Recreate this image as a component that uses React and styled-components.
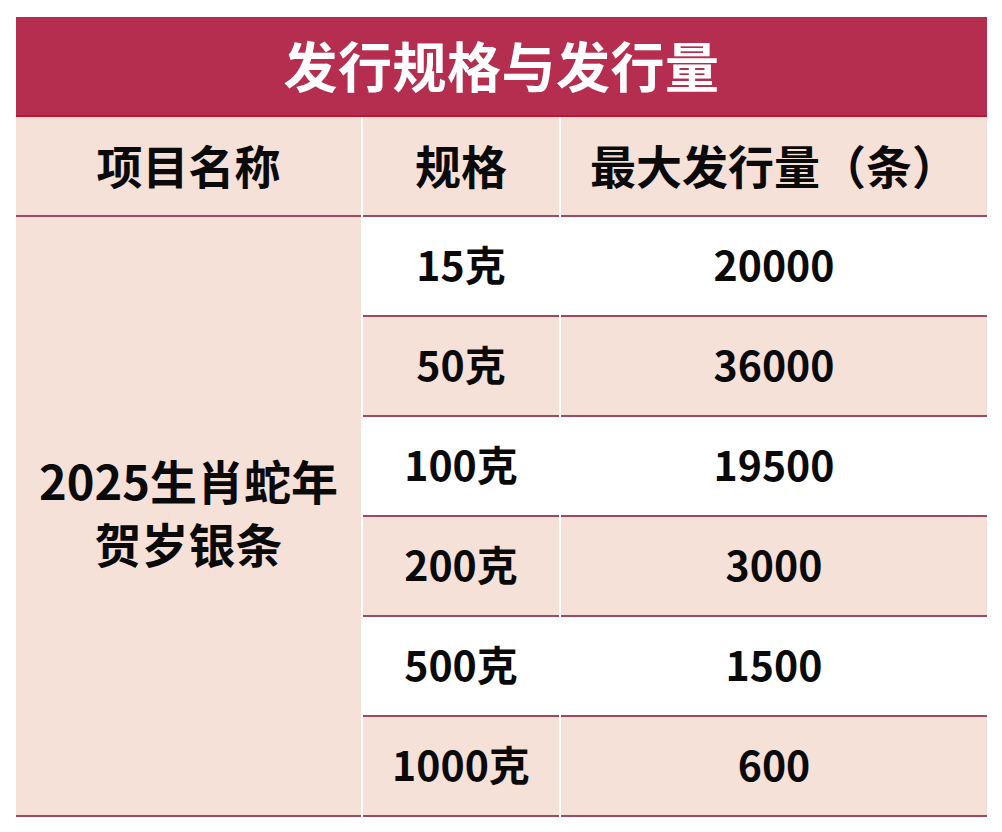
import React from 'react';
import styled, { createGlobalStyle } from 'styled-components';

const GlobalStyle = createGlobalStyle`
  html, body {
    margin: 0;
    padding: 0;
    background: #ffffff;
  }
  body {
    font-family: "Noto Sans CJK SC", "Noto Sans", sans-serif;
  }
`;

const colors = {
  title: '#b52e4f',
  titleLine: '#c3122f',
  pink: '#f6e1d9',
  white: '#ffffff',
  line: '#9c4a5f',
  text: '#0a0a0a',
};

const Page = styled.div`
  padding: 17px 15px 0 16px;
  width: 971px;
`;

const Title = styled.div`
  height: 100px;
  box-sizing: border-box;
  padding-bottom: 4px;
  background: ${colors.title};
  border-bottom: 2px solid ${colors.titleLine};
  color: #ffffff;
  font-size: 54px;
  font-weight: 700;
  display: flex;
  align-items: center;
  justify-content: center;
  letter-spacing: 0.5px;
`;

const Grid = styled.div`
  display: grid;
  grid-template-columns: 345px 196px 426px;
  grid-auto-rows: 100px;
  column-gap: 2px;
  background: ${colors.white};
`;

const Cell = styled.div`
  box-sizing: border-box;
  padding-bottom: 5px;
  background: ${p => (p.$pink ? colors.pink : colors.white)};
  border-bottom: 2px solid ${colors.line};
  display: flex;
  align-items: center;
  justify-content: center;
  text-align: center;
  color: ${colors.text};
  font-weight: 700;
  font-size: ${p => (p.$head ? '46px' : '41px')};
  line-height: 1;
`;

const NameCell = styled(Cell)`
  grid-row: span 6;
  flex-direction: column;
  gap: 16px;
  font-size: 47px;
  padding-bottom: 10px;
`;

const rows = [
  ['15克', '20000'],
  ['50克', '36000'],
  ['100克', '19500'],
  ['200克', '3000'],
  ['500克', '1500'],
  ['1000克', '600'],
];

export default function App() {
  return (
    <>
      <GlobalStyle />
      <Page>
        <Title>发行规格与发行量</Title>
        <Grid>
          <Cell $pink $head>项目名称</Cell>
          <Cell $pink $head>规格</Cell>
          <Cell $pink $head>最大发行量（条）</Cell>
          <NameCell $pink>
            <span>2025生肖蛇年</span>
            <span>贺岁银条</span>
          </NameCell>
          {rows.map(([spec, qty], i) => (
            <React.Fragment key={spec}>
              <Cell $pink={i % 2 === 1}>{spec}</Cell>
              <Cell $pink={i % 2 === 1}>{qty}</Cell>
            </React.Fragment>
          ))}
        </Grid>
      </Page>
    </>
  );
}
